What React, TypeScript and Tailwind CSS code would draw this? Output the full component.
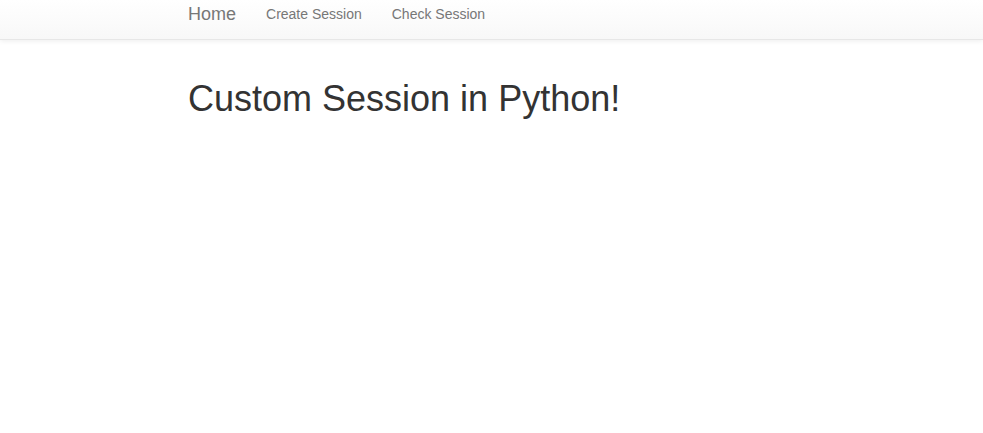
export default function App() {
  return (
    <div className="min-h-[433px] bg-white" style={{ fontFamily: '"Liberation Sans", Arial, sans-serif' }}>
      <nav className="h-[40px] border-b border-[#e7e7e7] bg-gradient-to-b from-white to-[#f8f8f8] shadow-[0_1px_5px_rgba(0,0,0,0.075)]">
        <div className="flex items-start pl-[173px]">
          <a className="block px-[15px] pt-[4px] text-[18px] leading-[20px] text-[#777]">Home</a>
          <a className="block px-[15px] pt-[4px] text-[14px] leading-[20px] text-[#777]">Create Session</a>
          <a className="block px-[15px] pt-[4px] text-[14px] leading-[20px] text-[#777]">Check Session</a>
        </div>
      </nav>
      <div className="pl-[188px]">
        <h1 className="mt-[39px] text-[36px] leading-[1.1] font-normal text-[#333]">Custom Session in Python!</h1>
      </div>
    </div>
  );
}
